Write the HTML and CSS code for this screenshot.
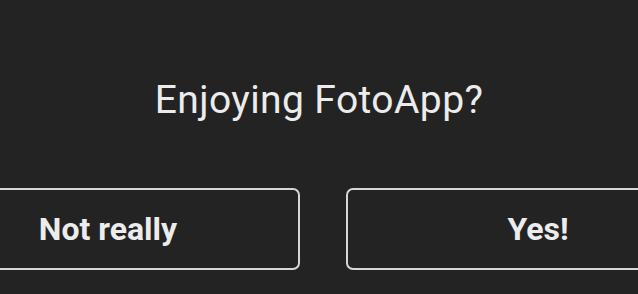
FILE: index.html
```html
<!DOCTYPE html>
<html lang="en">
<head>
<meta charset="utf-8">
<title>Enjoying FotoApp?</title>
<link rel="stylesheet" href="styles.css">
</head>
<body>
<main class="dialog">
  <h1 class="title">Enjoying FotoApp?</h1>
  <div class="actions">
    <button class="btn" type="button">Not really</button>
    <button class="btn" type="button">Yes!</button>
  </div>
</main>
</body>
</html>
```

FILE: styles.css
```css
html, body {
  margin: 0;
  padding: 0;
  background: #232323;
  overflow: hidden;
}
body {
  width: 638px;
  height: 294px;
  font-family: Roboto, "Liberation Sans", sans-serif;
  color: #ececec;
}
.dialog {
  display: flex;
  flex-direction: column;
  align-items: center;
  padding-top: 78px;
}
.title {
  margin: 0;
  font-size: 39px;
  font-weight: 400;
  line-height: 44px;
  letter-spacing: 0.4px;
  color: #ececec;
}
.actions {
  display: flex;
  justify-content: center;
  gap: 46px;
  width: 638px;
  box-sizing: border-box;
  padding-left: 8px;
  margin-top: 66px;
}
.btn {
  flex: none;
  width: 384px;
  height: 82px;
  box-sizing: border-box;
  border: 2px solid #d6d6d6;
  border-radius: 7px;
  background: transparent;
  color: #ececec;
  font-family: Roboto, "Liberation Sans", sans-serif;
  font-size: 32px;
  font-weight: 700;
  padding: 0;
}
```
